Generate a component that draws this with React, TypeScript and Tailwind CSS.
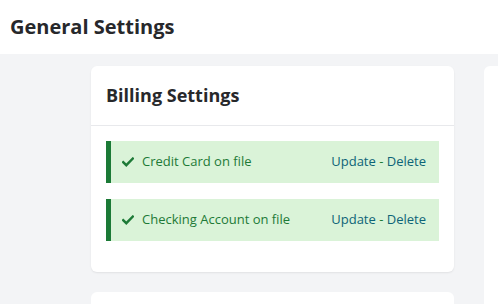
const accounts = ['Credit Card on file', 'Checking Account on file'];

const Check = () => (
  <svg width="12" height="10" viewBox="0 0 12 10" fill="none">
    <path d="M1.2 5.2 L4.3 8.2 L10.8 1.6" stroke="#1d7a37" strokeWidth="2.4" strokeLinecap="square" />
  </svg>
);

const App = () => {
  return (
    <div className="h-[304px] w-[498px] overflow-hidden bg-[#f3f4f6] font-['Open_Sans',sans-serif]">
      <div className="flex h-[54px] items-center bg-white pl-[10px]">
        <h1 className="text-[20px] font-bold leading-none text-[#27282b]">General Settings</h1>
      </div>
      <div className="flex gap-[30px] pl-[91px] pt-[12px]">
        <div className="flex w-[363px] shrink-0 flex-col gap-[20px]">
          <div className="rounded-md bg-white shadow-[0_1px_2px_rgba(0,0,0,0.08)]">
            <div className="flex h-[60px] items-center border-b border-[#e8e9ec] px-[15px]">
              <h2 className="text-[18px] font-bold text-[#27282b]">Billing Settings</h2>
            </div>
            <div className="flex flex-col gap-[16px] px-[15px] pb-[31px] pt-[15px]">
              {accounts.map((a) => (
                <div
                  key={a}
                  className="flex h-[42px] items-center justify-between border-l-[5px] border-[#1b7a36] bg-[#daf3d8] pl-[11px] pr-[13px] text-[13px]"
                >
                  <div className="flex items-center gap-[8px] text-[#1d7a37]">
                    <Check />
                    <span>{a}</span>
                  </div>
                  <span className="text-[#0d6477]">
                    Update <span className="text-[#1d7a37]">-</span> Delete
                  </span>
                </div>
              ))}
            </div>
          </div>
          <div className="h-[40px] rounded-md bg-white" />
        </div>
        <div className="h-[300px] w-[200px] shrink-0 rounded-md bg-white" />
      </div>
    </div>
  );
};

export default App;
